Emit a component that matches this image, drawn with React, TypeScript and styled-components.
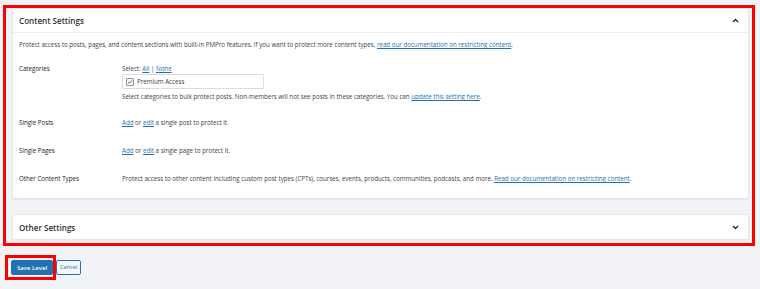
import React from "react";
import styled, { createGlobalStyle } from "styled-components";

const GlobalStyle = createGlobalStyle`
  html, body {
    margin: 0;
    padding: 0;
    background: #f1f3f6;
    font-family: "Open Sans", "Noto Sans", sans-serif;
    color: #3c434a;
  }
`;

const Page = styled.div`
  width: 760px;
  height: 289px;
  overflow: hidden;
`;

const Highlight = styled.div`
  border: 3px solid #ff0000;
  margin: 5px 5px 0 3px;
  padding: 0 3px 3px 6px;
  display: flex;
  flex-direction: column;
  gap: 15px;
`;

const Card = styled.section`
  background: #ffffff;
  border: 1px solid #e3e6ea;
  border-radius: 2px;
  box-shadow: 0 1px 2px rgba(0, 0, 0, 0.06);
`;

const CardHeader = styled.div<{ $open?: boolean }>`
  display: flex;
  align-items: center;
  justify-content: space-between;
  height: ${(p) => (p.$open ? "23px" : "24px")};
  padding: 0 9px 0 6px;
  border-bottom: ${(p) => (p.$open ? "1px solid #eceef1" : "none")};
`;

const Title = styled.h2`
  margin: 0;
  font-size: 8.1px;
  font-weight: 600;
  color: #2c3338;
`;

const CardBody = styled.div`
  padding: 8px 6px 5px 6px;
  font-size: 6.2px;
  line-height: 8px;
`;

const Intro = styled.p`
  margin: 0 0 6px;
`;

const Row = styled.div<{ $pb?: number }>`
  display: grid;
  grid-template-columns: 103px 1fr;
  padding: 10px 0 ${(p) => (p.$pb ?? 10)}px;
`;

const Label = styled.div`
  color: #1d2327;
`;

const Link = styled.a`
  color: #2271b1;
  text-decoration: underline;
`;

const CheckList = styled.div`
  width: 142px;
  height: 15px;
  box-sizing: border-box;
  border: 1px solid #dcdcde;
  border-radius: 1px;
  margin-top: 1px;
  display: flex;
  align-items: center;
  gap: 3px;
  padding-left: 3px;
`;

const Box = styled.span`
  width: 6px;
  height: 6px;
  border: 1px solid #8c8f94;
  border-radius: 1px;
  display: flex;
  align-items: center;
  justify-content: center;
`;

const Desc = styled.p`
  margin: 4px 0 0;
`;

const Actions = styled.div`
  display: flex;
  align-items: center;
  margin: 9px 0 0 5px;
`;

const SaveFrame = styled.div`
  border: 3px solid #ff0000;
  padding: 2px 0 2px 3px;
  display: flex;
`;

const Button = styled.button<{ $primary?: boolean }>`
  height: 15px;
  box-sizing: border-box;
  padding: 0 ${(p) => (p.$primary ? 5 : 3)}px;
  font-family: inherit;
  font-size: ${(p) => (p.$primary ? 6 : 5.6)}px;
  line-height: 1;
  border-radius: 2px;
  border: 1px solid #2271b1;
  background: ${(p) => (p.$primary ? "#2271b1" : "#f6f7f7")};
  color: ${(p) => (p.$primary ? "#ffffff" : "#2271b1")};
  font-weight: ${(p) => (p.$primary ? 600 : 400)};
`;

const Chevron = ({ up }: { up?: boolean }) => (
  <svg width="7" height="5" viewBox="0 0 7 5">
    <path
      d={up ? "M1 4 L3.5 1.5 L6 4" : "M1 1 L3.5 3.5 L6 1"}
      fill="none"
      stroke="#1d2327"
      strokeWidth="1.3"
    />
  </svg>
);

export default function App() {
  return (
    <Page>
      <GlobalStyle />
      <Highlight>
        <Card>
          <CardHeader $open>
            <Title>Content Settings</Title>
            <Chevron up />
          </CardHeader>
          <CardBody>
            <Intro>
              Protect access to posts, pages, and content sections with built-in PMPro features. If you want to
              protect more content types, <Link>read our documentation on restricting content</Link>.
            </Intro>
            <Row $pb={8}>
              <Label>Categories</Label>
              <div>
                <div>
                  Select: <Link>All</Link> | <Link>None</Link>
                </div>
                <CheckList>
                  <Box>
                    <svg width="6" height="6" viewBox="0 0 6 6">
                      <path d="M1 3 L2.4 4.4 L5 1.4" fill="none" stroke="#2271b1" strokeWidth="1" />
                    </svg>
                  </Box>
                  Premium Access
                </CheckList>
                <Desc>
                  Select categories to bulk protect posts. Non-members will not see posts in these categories. You
                  can <Link>update this setting here</Link>.
                </Desc>
              </div>
            </Row>
            <Row>
              <Label>Single Posts</Label>
              <div>
                <Link>Add</Link> or <Link>edit</Link> a single post to protect it.
              </div>
            </Row>
            <Row>
              <Label>Single Pages</Label>
              <div>
                <Link>Add</Link> or <Link>edit</Link> a single page to protect it.
              </div>
            </Row>
            <Row>
              <Label>Other Content Types</Label>
              <div>
                Protect access to other content including custom post types (CPTs), courses, events, products,
                communities, podcasts, and more. <Link>Read our documentation on restricting content</Link>.
              </div>
            </Row>
          </CardBody>
        </Card>
        <Card>
          <CardHeader>
            <Title>Other Settings</Title>
            <Chevron />
          </CardHeader>
        </Card>
      </Highlight>
      <Actions>
        <SaveFrame>
          <Button $primary>Save Level</Button>
        </SaveFrame>
        <Button>Cancel</Button>
      </Actions>
    </Page>
  );
}
